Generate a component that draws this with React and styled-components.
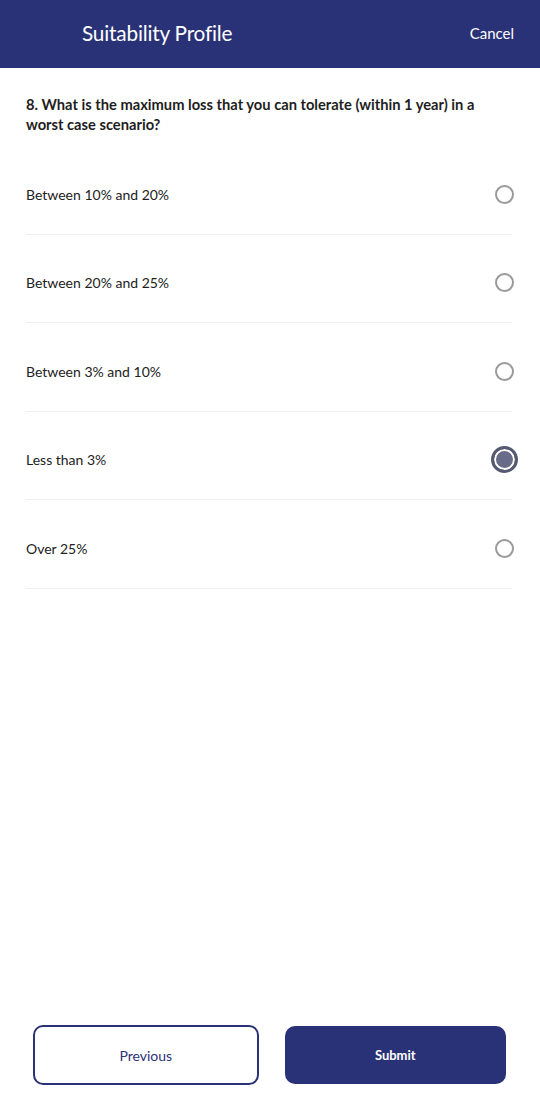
import React, { useState } from "react";
import styled, { createGlobalStyle } from "styled-components";

const options = [
  "Between 10% and 20%",
  "Between 20% and 25%",
  "Between 3% and 10%",
  "Less than 3%",
  "Over 25%",
];

const GlobalStyle = createGlobalStyle`
  html, body {
    margin: 0;
    padding: 0;
    background: #ffffff;
  }
  body {
    font-family: "Lato", "Open Sans", sans-serif;
    color: #222;
  }
  * {
    box-sizing: border-box;
  }
`;

function App() {
  const [selected, setSelected] = useState(3);

  return (
    <Page>
      <GlobalStyle />
      <Header>
        <Title>Suitability Profile</Title>
        <CancelLink>Cancel</CancelLink>
      </Header>

      <Content>
        <Question>
          8. What is the maximum loss that you can tolerate (within 1 year) in a
          worst case scenario?
        </Question>

        <OptionList>
          {options.map((label, index) => (
            <Option key={label} onClick={() => setSelected(index)}>
              <OptionLabel>{label}</OptionLabel>
              <Radio $checked={selected === index} />
            </Option>
          ))}
        </OptionList>
      </Content>

      <Footer>
        <PrevButton>Previous</PrevButton>
        <SubmitButton>Submit</SubmitButton>
      </Footer>
    </Page>
  );
}

export default App;

const Page = styled.div`
  width: 540px;
  height: 1112px;
  display: flex;
  flex-direction: column;
  background: #fff;
`;

const Header = styled.header`
  height: 68px;
  background-color: #2a3277;
  display: flex;
  align-items: center;
  justify-content: space-between;
  padding: 0 26px 3px 82px;
  color: #fff;
`;

const Title = styled.h1`
  margin: 0;
  font-size: 20.8px;
  font-weight: 400;
  letter-spacing: -0.2px;
`;

const CancelLink = styled.span`
  font-size: 15px;
`;

const Content = styled.main`
  flex: 1;
  padding: 26px 28px 0 26px;
`;

const Question = styled.p`
  margin: 0;
  font-size: 14.7px;
  font-weight: 700;
  line-height: 20px;
  color: #1e1e1e;
  padding-right: 24px;
`;

const OptionList = styled.div`
  display: flex;
  flex-direction: column;
  margin-top: 12px;
`;

const Option = styled.div`
  height: 88.5px;
  display: flex;
  align-items: center;
  justify-content: space-between;
  border-bottom: 1px solid #efefef;
  cursor: pointer;
  padding-top: 9px;
`;

const OptionLabel = styled.span`
  font-size: 14px;
  color: #222;
`;

const Radio = styled.span`
  width: ${(p) => (p.$checked ? "27px" : "19px")};
  height: ${(p) => (p.$checked ? "27px" : "19px")};
  margin-right: ${(p) => (p.$checked ? "-6px" : "-2px")};
  border-radius: 50%;
  border: ${(p) => (p.$checked ? "3px solid #565a70" : "2px solid #9a9a9a")};
  background: ${(p) => (p.$checked ? "#686c88" : "#fff")};
  box-shadow: ${(p) => (p.$checked ? "inset 0 0 0 2px #fff" : "none")};
`;

const Footer = styled.footer`
  display: flex;
  gap: 26px;
  padding: 0 34px 27px 33px;
  align-items: center;
`;

const ButtonBase = styled.button`
  flex: 1;
  border-radius: 10px;
  font-family: "Lato", "Open Sans", sans-serif;
  cursor: pointer;
`;

const PrevButton = styled(ButtonBase)`
  height: 60px;
  background: #fff;
  border: 2px solid #2a3277;
  color: #2a3277;
  font-size: 14px;
`;

const SubmitButton = styled(ButtonBase)`
  height: 58px;
  background: #2a3277;
  border: none;
  color: #fff;
  font-size: 13px;
  font-weight: 700;
`;
